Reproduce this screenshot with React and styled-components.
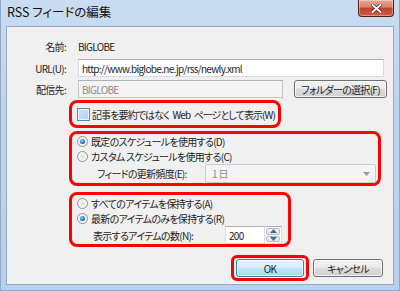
import React from 'react';
import styled, { createGlobalStyle } from 'styled-components';

const GlobalStyle = createGlobalStyle`
  html, body {
    margin: 0;
    padding: 0;
    background: #fff;
  }
  body {
    font-family: "Noto Sans CJK JP", "Noto Sans", sans-serif;
    font-size: 10px;
    letter-spacing: -0.7px;
    font-feature-settings: "palt" 1;
    color: #1e1e1e;
  }
`;

const Window = styled.div`
  width: 400px;
  height: 291px;
  box-sizing: border-box;
  display: flex;
  flex-direction: column;
  background: linear-gradient(180deg, #c9dcf1 0%, #bed4ec 40%, #b9d1ea 100%);
  border-left: 1px solid #8fa9c6;
  border-right: 1px solid #8fa9c6;
  border-bottom: 1px solid #8fa9c6;
`;

const TitleBar = styled.div`
  height: 26px;
  display: flex;
  align-items: flex-start;
  padding-left: 6px;
`;

const Title = styled.span`
  font-size: 12.5px;
  letter-spacing: 0;
  line-height: 24px;
  color: #111;
  flex: 1;
`;

const CloseButton = styled.div`
  width: 36px;
  height: 17px;
  margin-right: 5px;
  box-sizing: border-box;
  border: 1px solid #5a1f12;
  border-top: none;
  border-radius: 0 0 4px 4px;
  background: linear-gradient(180deg, #e4a796 0%, #d7836f 45%, #c1402a 50%, #cf5f43 100%);
  box-shadow: inset 0 0 0 1px rgba(255, 255, 255, 0.35);
  display: flex;
  align-items: center;
  justify-content: center;
`;

const Body = styled.div`
  flex: 1;
  margin: 0 5px 5px 5px;
  border: 1px solid #95aac3;
  background: #f0f0f0;
  display: flex;
  flex-direction: column;
`;

const Row = styled.div`
  display: flex;
  align-items: center;
  height: 18px;
  margin-top: ${({ top }) => top || 0}px;
`;

const Label = styled.div`
  width: 59px;
  text-align: right;
  margin-right: 12px;
`;

const TextInput = styled.div`
  box-sizing: border-box;
  width: ${({ w }) => w}px;
  height: 18px;
  display: flex;
  align-items: center;
  padding-left: 3px;
  border: 1px solid ${({ disabled }) => (disabled ? '#c2c6ca' : '#d6dbe2')};
  border-top-color: ${({ disabled }) => (disabled ? '#adb2b5' : '#abadb3')};
  background: ${({ disabled }) => (disabled ? '#f4f4f4' : '#fff')};
  color: ${({ disabled }) => (disabled ? '#8a8a8a' : '#1e1e1e')};
  white-space: nowrap;
  overflow: hidden;
`;

const Button = styled.div`
  box-sizing: border-box;
  width: ${({ w }) => w}px;
  height: 18px;
  margin-left: ${({ left }) => left || 0}px;
  display: flex;
  align-items: center;
  justify-content: center;
  border: 1px solid ${({ primary }) => (primary ? '#3c7fb1' : '#707070')};
  border-radius: 3px;
  background: ${({ primary }) =>
    primary
      ? 'linear-gradient(180deg, #eaf6fd 0%, #d9f0fc 45%, #bee6fd 50%, #a7d9f5 100%)'
      : 'linear-gradient(180deg, #f2f2f2 0%, #ebebeb 45%, #dddddd 50%, #cfcfcf 100%)'};
  box-shadow: inset 0 0 0 1px rgba(255, 255, 255, 0.7);
  white-space: nowrap;
`;

const Highlight = styled.div`
  box-sizing: border-box;
  width: ${({ w }) => w}px;
  height: ${({ h }) => h}px;
  margin-left: 62px;
  margin-top: ${({ top }) => top || 0}px;
  border: 3px solid #ff0000;
  border-radius: 8px;
  display: flex;
  flex-direction: column;
  padding-left: 5px;
`;

const Option = styled.div`
  display: flex;
  align-items: center;
  height: ${({ h }) => h || 15}px;
  margin-left: ${({ indent }) => indent || 0}px;
  letter-spacing: ${({ tight }) => (tight ? '-0.9px' : 'inherit')};
  word-spacing: ${({ tight }) => (tight ? '2px' : 'normal')};
  white-space: nowrap;
`;

const FieldLabel = styled.span`
  width: ${({ w }) => w}px;
  flex: none;
`;

const Checkbox = styled.span`
  box-sizing: border-box;
  width: 13px;
  height: 13px;
  border: 1px solid #5b87b0;
  background: linear-gradient(135deg, #cfe4f8 0%, #bcd9f4 60%, #a9cdef 100%);
  box-shadow: inset 0 0 0 1px #e9f3fc;
  margin-right: 2px;
  flex: none;
`;

const Radio = styled.span`
  box-sizing: border-box;
  width: 11px;
  height: 11px;
  border-radius: 50%;
  border: 1px solid #939393;
  background: radial-gradient(circle at 50% 50%, #e3e3e3 0%, #f4f4f4 60%, #ffffff 100%);
  margin-right: 3px;
  flex: none;
  display: flex;
  align-items: center;
  justify-content: center;
  &::after {
    content: '';
    display: ${({ checked }) => (checked ? 'block' : 'none')};
    width: 5px;
    height: 5px;
    border-radius: 50%;
    background: radial-gradient(circle at 40% 35%, #9fd6f7 0%, #2b86c8 45%, #0c3e78 100%);
  }
`;

const Select = styled.div`
  box-sizing: border-box;
  width: 171px;
  height: 19px;
  border: 1px solid #c9cdd2;
  border-radius: 2px;
  background: #f4f4f4;
  color: #8d8d8d;
  display: flex;
  align-items: center;
  padding: 0 5px 0 6px;
  & > span {
    flex: 1;
  }
`;

const Spinner = styled.div`
  display: flex;
  height: 18px;
`;

const SpinInput = styled.div`
  box-sizing: border-box;
  width: 39px;
  height: 18px;
  border: 1px solid #d6dbe2;
  border-top-color: #abadb3;
  border-right: none;
  background: #fff;
  display: flex;
  align-items: center;
  padding-left: 3px;
`;

const SpinButtons = styled.div`
  box-sizing: border-box;
  width: 18px;
  height: 18px;
  border: 1px solid #d6dbe2;
  border-top-color: #abadb3;
  background: #fff;
  display: flex;
  flex-direction: column;
  padding: 1px;
  gap: 1px;
`;

const SpinButton = styled.div`
  flex: 1;
  border: 1px solid #b4bdc6;
  border-radius: 2px;
  background: linear-gradient(180deg, #f3f3f3 0%, #dfe1e4 100%);
  display: flex;
  align-items: center;
  justify-content: center;
`;

const Footer = styled.div`
  display: flex;
  align-items: center;
  margin-top: 8px;
`;

const OkFrame = styled.div`
  box-sizing: border-box;
  width: 78px;
  height: 26px;
  margin-left: 224px;
  border: 3px solid #ff0000;
  border-radius: 6px;
  display: flex;
  align-items: center;
  justify-content: center;
`;

const Arrow = ({ up, color = '#4d6a8f' }) => (
  <svg width="7" height="4" viewBox="0 0 7 4">
    <path d={up ? 'M0 4 L3.5 0 L7 4 Z' : 'M0 0 L3.5 4 L7 0 Z'} fill={color} />
  </svg>
);

export default function App() {
  return (
    <>
      <GlobalStyle />
      <Window>
        <TitleBar>
          <Title>RSS フィードの編集</Title>
          <CloseButton>
            <svg width="11" height="9" viewBox="0 0 11 9">
              <path
                d="M1.5 1 L9.5 8 M9.5 1 L1.5 8"
                stroke="#3d1008"
                strokeWidth="3.2"
                strokeLinecap="square"
              />
              <path
                d="M1.5 1 L9.5 8 M9.5 1 L1.5 8"
                stroke="#fff"
                strokeWidth="2"
                strokeLinecap="square"
              />
            </svg>
          </CloseButton>
        </TitleBar>
        <Body>
          <Row top={10}>
            <Label>名前:</Label>
            <span>BIGLOBE</span>
          </Row>
          <Row top={4}>
            <Label>URL(U):</Label>
            <TextInput w={306}>http://www.biglobe.ne.jp/rss/newly.xml</TextInput>
          </Row>
          <Row top={3}>
            <Label>配信先:</Label>
            <TextInput w={205} disabled>
              BIGLOBE
            </TextInput>
            <Button w={93} left={11}>
              フォルダーの選択(F)
            </Button>
          </Row>
          <Highlight w={212} h={28} top={2}>
            <Option h={22} tight>
              <Checkbox />
              記事を要約ではなく Web ページとして表示(W)
            </Option>
          </Highlight>
          <Highlight w={312} h={55} top={3}>
            <Option>
              <Radio checked />
              既定のスケジュールを使用する(D)
            </Option>
            <Option>
              <Radio />
              カスタム スケジュールを使用する(C)
            </Option>
            <Option h={19} indent={20}>
              <FieldLabel w={108}>フィードの更新頻度(E):</FieldLabel>
              <Select>
                <span>1 日</span>
                <Arrow color="#9a9a9a" />
              </Select>
            </Option>
          </Highlight>
          <Highlight w={222} h={55} top={6}>
            <Option h={16}>
              <Radio />
              すべてのアイテムを保持する(A)
            </Option>
            <Option h={15}>
              <Radio checked />
              最新のアイテムのみを保持する(R)
            </Option>
            <Option h={18} indent={16}>
              <FieldLabel w={132}>表示するアイテムの数(N):</FieldLabel>
              <Spinner>
                <SpinInput>200</SpinInput>
                <SpinButtons>
                  <SpinButton>
                    <Arrow up />
                  </SpinButton>
                  <SpinButton>
                    <Arrow />
                  </SpinButton>
                </SpinButtons>
              </Spinner>
            </Option>
          </Highlight>
          <Footer>
            <OkFrame>
              <Button w={68} primary>
                OK
              </Button>
            </OkFrame>
            <Button w={70} left={4}>
              キャンセル
            </Button>
          </Footer>
        </Body>
      </Window>
    </>
  );
}
